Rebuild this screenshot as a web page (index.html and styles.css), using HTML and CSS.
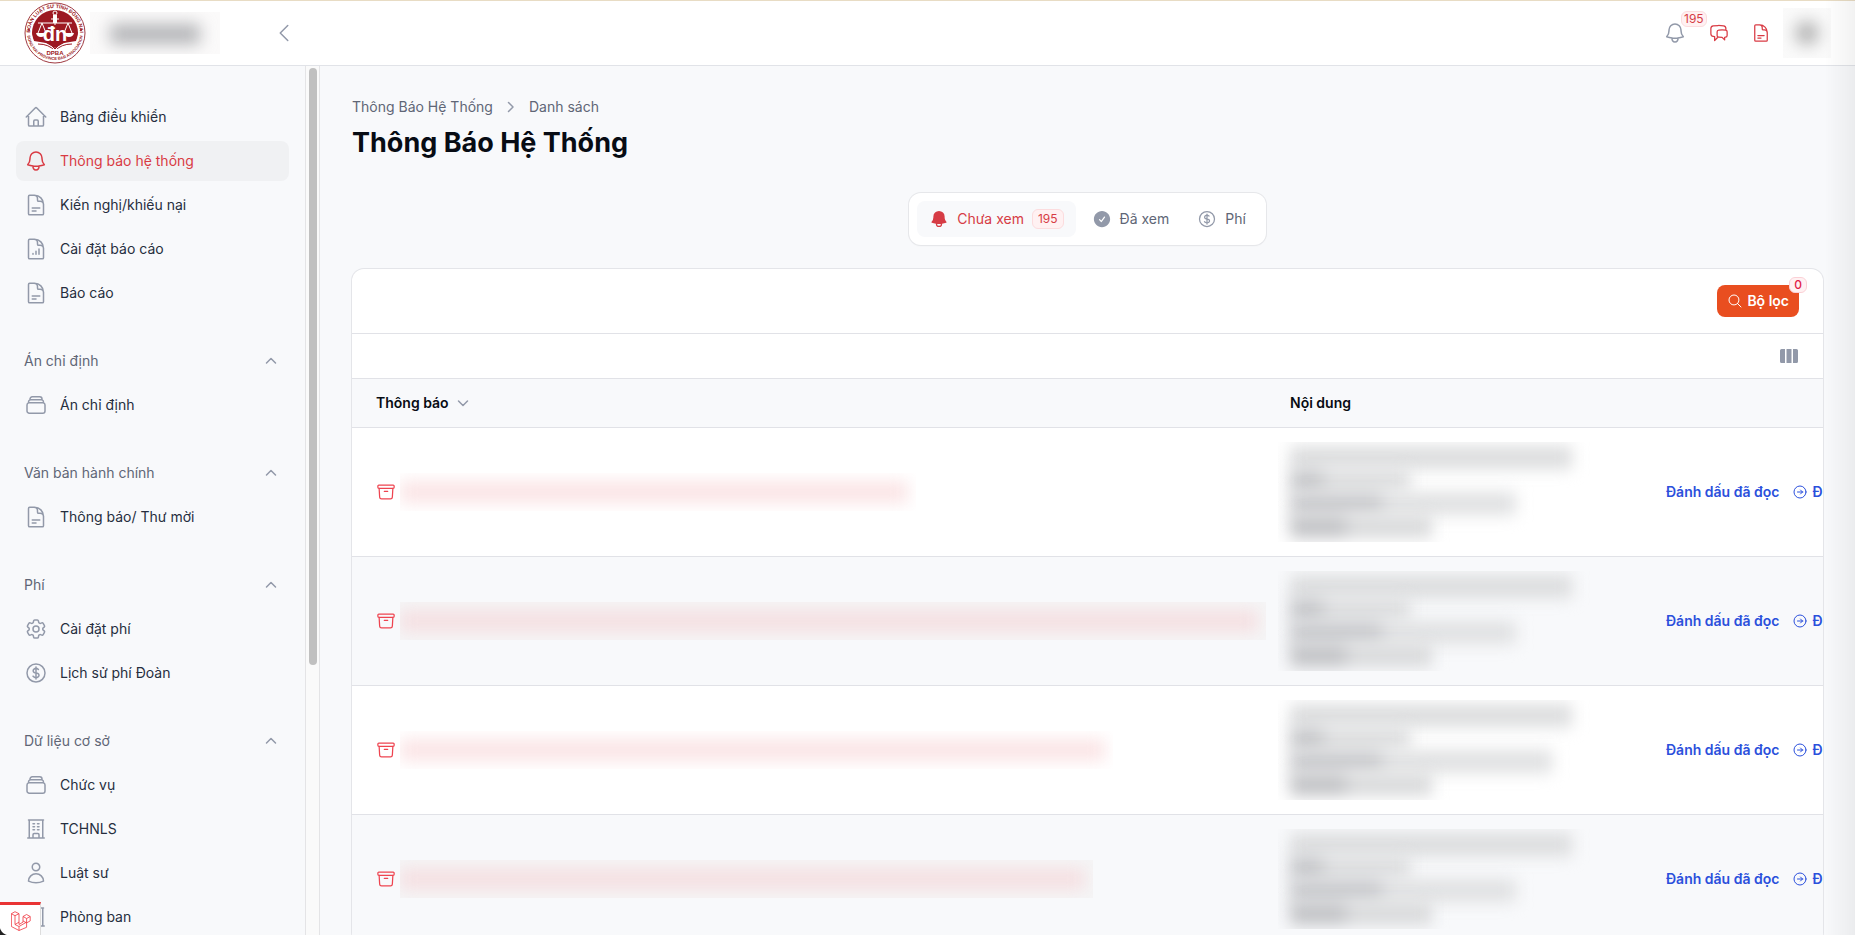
FILE: index.html
```
<!DOCTYPE html>
<html lang="vi">
<head>
    <meta charset="UTF-8">
    <meta name="viewport" content="width=device-width, initial-scale=1.0">
    <title>Thông Báo Hệ Thống</title>
    <link rel="stylesheet" href="styles.css">
</head>
<body>
    <!-- icon set -->
    <svg class="sprite" aria-hidden="true">
        <symbol id="i-home" viewBox="0 0 24 24"><path d="m2.25 12 8.954-8.955c.44-.439 1.152-.439 1.591 0L21.75 12M4.5 9.75v10.125c0 .621.504 1.125 1.125 1.125H9.75v-4.875c0-.621.504-1.125 1.125-1.125h2.25c.621 0 1.125.504 1.125 1.125V21h4.125c.621 0 1.125-.504 1.125-1.125V9.75M8.25 21h8.25"/></symbol>
        <symbol id="i-bell" viewBox="0 0 24 24"><path d="M14.857 17.082a23.848 23.848 0 0 0 5.454-1.31A8.967 8.967 0 0 1 18 9.75V9A6 6 0 0 0 6 9v.75a8.967 8.967 0 0 1-2.312 6.022c1.733.64 3.56 1.085 5.455 1.31m5.714 0a24.255 24.255 0 0 1-5.714 0m5.714 0a3 3 0 1 1-5.714 0"/></symbol>
        <symbol id="i-doc" viewBox="0 0 24 24"><path d="M19.5 14.25v-2.625a3.375 3.375 0 0 0-3.375-3.375h-1.5A1.125 1.125 0 0 1 13.5 7.125v-1.5a3.375 3.375 0 0 0-3.375-3.375H8.25m0 12.75h7.5m-7.5 3H12M10.5 2.25H5.625c-.621 0-1.125.504-1.125 1.125v17.25c0 .621.504 1.125 1.125 1.125h12.75c.621 0 1.125-.504 1.125-1.125V11.25a9 9 0 0 0-9-9Z"/></symbol>
        <symbol id="i-chart" viewBox="0 0 24 24"><path d="M19.5 14.25v-2.625a3.375 3.375 0 0 0-3.375-3.375h-1.5A1.125 1.125 0 0 1 13.5 7.125v-1.5a3.375 3.375 0 0 0-3.375-3.375H8.25M9 16.5v.75m3-3v3M15 12v5.25m-4.5-15H5.625c-.621 0-1.125.504-1.125 1.125v17.25c0 .621.504 1.125 1.125 1.125h12.75c.621 0 1.125-.504 1.125-1.125V11.25a9 9 0 0 0-9-9Z"/></symbol>
        <symbol id="i-stack" viewBox="0 0 24 24"><path d="M6 6.878V6a2.25 2.25 0 0 1 2.25-2.25h7.5A2.25 2.25 0 0 1 18 6v.878m-12 0c.235-.083.487-.128.75-.128h10.5c.263 0 .515.045.75.128m-12 0A2.25 2.25 0 0 0 4.5 9v.878m13.5-3A2.25 2.25 0 0 1 19.5 9v.878m0 0a2.246 2.246 0 0 0-.75-.128H5.25c-.263 0-.515.045-.75.128m15 0A2.25 2.25 0 0 1 21 12v6a2.25 2.25 0 0 1-2.25 2.25H5.25A2.25 2.25 0 0 1 3 18v-6c0-.98.626-1.813 1.5-2.122"/></symbol>
        <symbol id="i-cog" viewBox="0 0 24 24"><path d="M9.594 3.94c.09-.542.56-.94 1.11-.94h2.593c.55 0 1.02.398 1.11.94l.213 1.281c.063.374.313.686.645.87.074.04.147.083.22.127.325.196.72.257 1.075.124l1.217-.456a1.125 1.125 0 0 1 1.37.49l1.296 2.247a1.125 1.125 0 0 1-.26 1.431l-1.003.827c-.293.241-.438.613-.43.992a7.723 7.723 0 0 1 0 .255c-.008.378.137.75.43.991l1.004.827c.424.35.534.955.26 1.43l-1.298 2.247a1.125 1.125 0 0 1-1.369.491l-1.217-.456c-.355-.133-.75-.072-1.076.124a6.47 6.47 0 0 1-.22.128c-.331.183-.581.495-.644.869l-.213 1.281c-.09.543-.56.94-1.11.94h-2.594c-.55 0-1.019-.398-1.11-.94l-.213-1.281c-.062-.374-.312-.686-.644-.87a6.52 6.52 0 0 1-.22-.127c-.325-.196-.72-.257-1.076-.124l-1.217.456a1.125 1.125 0 0 1-1.369-.49l-1.297-2.247a1.125 1.125 0 0 1 .26-1.431l1.004-.827c.292-.24.437-.613.43-.991a6.932 6.932 0 0 1 0-.255c.007-.38-.138-.751-.43-.992l-1.004-.827a1.125 1.125 0 0 1-.26-1.43l1.297-2.247a1.125 1.125 0 0 1 1.37-.491l1.216.456c.356.133.751.072 1.076-.124.072-.044.146-.086.22-.128.332-.183.582-.495.644-.869l.214-1.28ZM15 12a3 3 0 1 1-6 0 3 3 0 0 1 6 0Z"/></symbol>
        <symbol id="i-dollar" viewBox="0 0 24 24"><path d="M12 6v12m-3-2.818.879.659c1.171.879 3.07.879 4.242 0 1.172-.879 1.172-2.303 0-3.182C13.536 12.219 12.768 12 12 12c-.725 0-1.45-.22-2.003-.659-1.106-.879-1.106-2.303 0-3.182s2.9-.879 4.006 0l.415.33M21 12a9 9 0 1 1-18 0 9 9 0 0 1 18 0Z"/></symbol>
        <symbol id="i-building" viewBox="0 0 24 24"><path d="M3.75 21h16.5M4.5 3h15M5.25 3v18m13.5-18v18M9 6.75h1.5m-1.5 3h1.5m-1.5 3h1.5m3-6H15m-1.5 3H15m-1.5 3H15M9 21v-3.375c0-.621.504-1.125 1.125-1.125h3.75c.621 0 1.125.504 1.125 1.125V21"/></symbol>
        <symbol id="i-user" viewBox="0 0 24 24"><path d="M15.75 6a3.75 3.75 0 1 1-7.5 0 3.75 3.75 0 0 1 7.5 0ZM4.501 20.118a7.5 7.5 0 0 1 14.998 0A17.933 17.933 0 0 1 12 21.75c-2.676 0-5.216-.584-7.499-1.632Z"/></symbol>
        <symbol id="i-chat" viewBox="0 0 24 24"><path d="M20.25 8.511c.884.284 1.5 1.128 1.5 2.097v4.286c0 1.136-.847 2.1-1.98 2.193-.34.027-.68.052-1.02.072v3.091l-3-3c-1.354 0-2.694-.055-4.02-.163a2.115 2.115 0 0 1-.825-.242m9.345-8.334a2.126 2.126 0 0 0-.476-.095 48.64 48.64 0 0 0-8.048 0c-1.131.094-1.976 1.057-1.976 2.192v4.286c0 .837.46 1.58 1.155 1.951m9.345-8.334V6.637c0-1.621-1.152-3.026-2.76-3.235A48.455 48.455 0 0 0 11.25 3c-2.115 0-4.198.137-6.24.402-1.608.209-2.76 1.614-2.76 3.235v6.226c0 1.621 1.152 3.026 2.76 3.235.577.075 1.157.14 1.74.194V21l4.155-4.155"/></symbol>
        <symbol id="i-archive" viewBox="0 0 24 24"><path d="m20.25 7.5-.625 10.632a2.25 2.25 0 0 1-2.247 2.118H6.622a2.25 2.25 0 0 1-2.247-2.118L3.75 7.5M10 11.25h4M3.375 7.5h17.25c.621 0 1.125-.504 1.125-1.125v-1.5c0-.621-.504-1.125-1.125-1.125H3.375c-.621 0-1.125.504-1.125 1.125v1.5c0 .621.504 1.125 1.125 1.125Z"/></symbol>
        <symbol id="i-search" viewBox="0 0 24 24"><path d="m21 21-5.197-5.197m0 0A7.5 7.5 0 1 0 5.196 5.196a7.5 7.5 0 0 0 10.607 10.607Z"/></symbol>
        <symbol id="i-go" viewBox="0 0 24 24"><path d="m12.75 15 3-3m0 0-3-3m3 3h-7.5M21 12a9 9 0 1 1-18 0 9 9 0 0 1 18 0Z"/></symbol>
        <symbol id="i-left" viewBox="0 0 24 24"><path d="M15.75 19.5 8.25 12l7.5-7.5"/></symbol>
        <symbol id="i-up" viewBox="0 0 20 20"><path d="m5.5 12 4.5-4.5 4.5 4.5"/></symbol>
        <symbol id="i-down" viewBox="0 0 20 20"><path d="m5.5 8 4.5 4.5 4.5-4.5"/></symbol>
        <symbol id="i-right" viewBox="0 0 20 20"><path d="m7.5 5.5 4.5 4.5-4.5 4.5"/></symbol>
        <symbol id="i-bell-solid" viewBox="0 0 24 24"><path fill-rule="evenodd" d="M5.25 9a6.75 6.75 0 0 1 13.5 0v.75c0 2.123.8 4.057 2.118 5.52a.75.75 0 0 1-.297 1.206c-1.544.57-3.16.99-4.831 1.243a3.75 3.75 0 1 1-7.48 0 24.585 24.585 0 0 1-4.831-1.244.75.75 0 0 1-.298-1.205A8.217 8.217 0 0 0 5.25 9.75V9Zm4.502 8.9a2.25 2.25 0 1 0 4.496 0 25.057 25.057 0 0 1-4.496 0Z"/></symbol>
        <symbol id="i-check-solid" viewBox="0 0 24 24"><path fill-rule="evenodd" d="M2.25 12c0-5.385 4.365-9.75 9.75-9.75s9.75 4.365 9.75 9.75-4.365 9.75-9.75 9.75S2.25 17.385 2.25 12Zm13.36-1.814a.75.75 0 1 0-1.22-.872l-3.236 4.53L9.53 12.22a.75.75 0 0 0-1.06 1.06l2.25 2.25a.75.75 0 0 0 1.14-.094l3.75-5.25Z"/></symbol>
        <symbol id="i-columns" viewBox="0 0 20 20"><path d="M2.5 3H6v14H2.5A1.5 1.5 0 0 1 1 15.500v-11A1.500 1.500 0 0 1 2.500 3ZM7.500 3h5v14h-5ZM14 3h3.500A1.500 1.500 0 0 1 19 4.500v11a1.500 1.500 0 0 1-1.500 1.500H14Z"/></symbol>
    </svg>

    <header class="topbar">
        <div class="brand">
            <svg class="logo" viewBox="0 0 62 62" role="img" aria-label="DPBA">
                <defs>
                    <path id="arc-top" d="M7 38a25 25 0 1 1 48 0"/>
                    <path id="arc-bottom" d="M3 30a28 28 0 0 0 56 0"/>
                </defs>
                <circle cx="31" cy="31" r="30" fill="#fff" stroke="#a03a42" stroke-width="1"/>
                <circle cx="31" cy="31" r="23" fill="#9c1822"/>
                <path d="M8 33v2a23 23 0 0 0 46 0v-2l-2 6-12 2-9 5-9-5-12-2z" fill="#fff"/>
                <path d="M11 38q13 0 20 9 7-9 20-9M14 42q11 0 17 7 6-7 17-7" fill="none" stroke="#9c1822" stroke-width="1"/>
                <circle cx="31" cy="11" r="2" fill="none" stroke="#fff"/>
                <path d="M31 13v10M14 21h34M27 17h8M18 21l-4 10m4-10 4 10M44 21l-4 10m4-10 4 10" fill="none" stroke="#fff"/>
                <path d="M12 31h10q-1 4-5 4t-5-4zM40 31h10q-1 4-5 4t-5-4zM29 13h4v8h-4z" fill="#fff"/>
                <text class="logo-mark" x="31" y="39">đn</text>
                <rect x="22" y="47" width="18" height="7" fill="#fff"/>
                <text class="logo-name" x="31" y="53">DPBA</text>
                <circle cx="5" cy="28" r="1" fill="#9c1822"/>
                <circle cx="57" cy="28" r="1" fill="#9c1822"/>
                <text class="logo-ring logo-ring-top"><textPath href="#arc-top" startOffset="50%">ĐOÀN LUẬT SƯ TỈNH ĐỒNG NAI</textPath></text>
                <text class="logo-ring"><textPath href="#arc-bottom" startOffset="50%">DONG NAI PROVINCE BAR ASSOCIATION</textPath></text>
            </svg>
            <span class="masked masked-name"><i></i></span>
        </div>
        <button class="icon-btn collapse" aria-label="Thu gọn"><svg class="icon"><use href="#i-left"/></svg></button>
        <div class="tools">
            <div class="tool-icons">
                <button class="icon-btn bell" aria-label="Thông báo"><svg class="icon"><use href="#i-bell"/></svg><span class="badge">195</span></button>
                <button class="icon-btn red" aria-label="Trao đổi"><svg class="icon icon-md"><use href="#i-chat"/></svg></button>
                <button class="icon-btn red" aria-label="Văn bản"><svg class="icon icon-md"><use href="#i-doc"/></svg></button>
            </div>
            <span class="masked masked-avatar"><i></i></span>
        </div>
    </header>

    <div class="layout">
        <aside class="sidebar">
            <nav class="nav">
                <div class="group">
                    <a class="item" href="#"><svg class="icon"><use href="#i-home"/></svg>Bảng điều khiển</a>
                    <a class="item active" href="#"><svg class="icon"><use href="#i-bell"/></svg>Thông báo hệ thống</a>
                    <a class="item" href="#"><svg class="icon"><use href="#i-doc"/></svg>Kiến nghị/khiếu nại</a>
                    <a class="item" href="#"><svg class="icon"><use href="#i-chart"/></svg>Cài đặt báo cáo</a>
                    <a class="item" href="#"><svg class="icon"><use href="#i-doc"/></svg>Báo cáo</a>
                </div>
                <div class="group">
                    <button class="group-title">Án chỉ định<svg class="icon icon-md"><use href="#i-up"/></svg></button>
                    <a class="item" href="#"><svg class="icon"><use href="#i-stack"/></svg>Án chỉ định</a>
                </div>
                <div class="group">
                    <button class="group-title">Văn bản hành chính<svg class="icon icon-md"><use href="#i-up"/></svg></button>
                    <a class="item" href="#"><svg class="icon"><use href="#i-doc"/></svg>Thông báo/ Thư mời</a>
                </div>
                <div class="group">
                    <button class="group-title">Phí<svg class="icon icon-md"><use href="#i-up"/></svg></button>
                    <a class="item" href="#"><svg class="icon"><use href="#i-cog"/></svg>Cài đặt phí</a>
                    <a class="item" href="#"><svg class="icon"><use href="#i-dollar"/></svg>Lịch sử phí Đoàn</a>
                </div>
                <div class="group">
                    <button class="group-title">Dữ liệu cơ sở<svg class="icon icon-md"><use href="#i-up"/></svg></button>
                    <a class="item" href="#"><svg class="icon"><use href="#i-stack"/></svg>Chức vụ</a>
                    <a class="item" href="#"><svg class="icon"><use href="#i-building"/></svg>TCHNLS</a>
                    <a class="item" href="#"><svg class="icon"><use href="#i-user"/></svg>Luật sư</a>
                    <a class="item" href="#"><svg class="icon"><use href="#i-building"/></svg>Phòng ban</a>
                </div>
            </nav>
            <div class="scrollbar"><div class="thumb"></div></div>
        </aside>

        <main class="main">
            <div class="heading">
                <nav class="crumbs">
                    <a href="#">Thông Báo Hệ Thống</a>
                    <svg class="icon icon-md"><use href="#i-right"/></svg>
                    <a href="#">Danh sách</a>
                </nav>
                <h1>Thông Báo Hệ Thống</h1>
            </div>

            <div class="tabs">
                <button class="tab selected"><svg class="icon icon-md solid"><use href="#i-bell-solid"/></svg>Chưa xem<span class="badge">195</span></button>
                <button class="tab"><svg class="icon icon-md solid"><use href="#i-check-solid"/></svg>Đã xem</button>
                <button class="tab"><svg class="icon icon-md"><use href="#i-dollar"/></svg>Phí</button>
            </div>

            <section class="card">
                <div class="card-head">
                    <button class="filter"><svg class="icon icon-sm"><use href="#i-search"/></svg>Bộ lọc<span class="badge">0</span></button>
                </div>
                <div class="card-tools">
                    <button class="icon-btn" aria-label="Cột"><svg class="icon icon-md solid"><use href="#i-columns"/></svg></button>
                </div>
                <table>
                    <colgroup><col><col class="col-content"><col class="col-actions"></colgroup>
                    <thead>
                        <tr>
                            <th><button class="sort">Thông báo<svg class="icon icon-md"><use href="#i-down"/></svg></button></th>
                            <th>Nội dung</th>
                            <th></th>
                        </tr>
                    </thead>
                    <tbody>
                        <tr>
                            <td><div class="title"><svg class="icon icon-md"><use href="#i-archive"/></svg><span class="masked masked-title" style="width: 516px"><i></i></span></div></td>
                            <td class="content"><div class="masked masked-content"><i></i><i></i><i></i><i></i></div></td>
                            <td><div class="actions"><a href="#">Đánh dấu đã đọc</a><a href="#"><svg class="icon icon-sm"><use href="#i-go"/></svg>Đ</a></div></td>
                        </tr>
                        <tr>
                            <td><div class="title"><svg class="icon icon-md"><use href="#i-archive"/></svg><span class="masked masked-title" style="width: 875px"><i></i></span></div></td>
                            <td class="content"><div class="masked masked-content"><i></i><i></i><i></i><i></i></div></td>
                            <td><div class="actions"><a href="#">Đánh dấu đã đọc</a><a href="#"><svg class="icon icon-sm"><use href="#i-go"/></svg>Đ</a></div></td>
                        </tr>
                        <tr>
                            <td><div class="title"><svg class="icon icon-md"><use href="#i-archive"/></svg><span class="masked masked-title" style="width: 713px"><i></i></span></div></td>
                            <td class="content"><div class="masked masked-content"><i></i><i></i><i class="long"></i><i></i></div></td>
                            <td><div class="actions"><a href="#">Đánh dấu đã đọc</a><a href="#"><svg class="icon icon-sm"><use href="#i-go"/></svg>Đ</a></div></td>
                        </tr>
                        <tr>
                            <td><div class="title"><svg class="icon icon-md"><use href="#i-archive"/></svg><span class="masked masked-title" style="width: 693px"><i></i></span></div></td>
                            <td class="content"><div class="masked masked-content"><i></i><i></i><i></i><i></i></div></td>
                            <td><div class="actions"><a href="#">Đánh dấu đã đọc</a><a href="#"><svg class="icon icon-sm"><use href="#i-go"/></svg>Đ</a></div></td>
                        </tr>
                    </tbody>
                </table>
            </section>
        </main>
    </div>

    <button class="debugbar" aria-label="Debugbar">
        <svg viewBox="0 0 50 52"><path d="M1 9 10 4l10 5v27l10-6V16l9-5 9 5v11l-9 5v11L20 51 1 41ZM1 9l9 5 10-5M10 14v22l10 5 19-11M10 36l10-6M20 41v10M30 16l9 5 9-5M39 21v11M30 27l9 5"/></svg>
    </button>
    <div class="edge-shade"></div>
</body>
</html>
```
FILE: styles.css
```
* {
    box-sizing: border-box;
}
body {
    margin: 0;
    height: 100vh;
    overflow: hidden;
    display: flex;
    flex-direction: column;
    font-family: Inter, "Noto Sans", sans-serif;
    font-size: 14px;
    line-height: 20px;
    color: #262e3e;
    background: #f8f9fb;
}
a {
    color: inherit;
    text-decoration: none;
}
button {
    font: inherit;
    color: inherit;
    background: none;
    border: none;
    padding: 0;
    cursor: pointer;
}
.sprite {
    position: absolute;
    width: 0;
    height: 0;
}
.icon {
    width: 24px;
    height: 24px;
    flex-shrink: 0;
    fill: none;
    stroke: currentColor;
    stroke-width: 1.5;
    stroke-linecap: round;
    stroke-linejoin: round;
    color: #9299a9;
}
.icon-md {
    width: 20px;
    height: 20px;
}
.icon-sm {
    width: 16px;
    height: 16px;
}
.solid {
    fill: currentColor;
    stroke: none;
}
.icon-btn {
    position: relative;
    display: flex;
}
.badge {
    padding: 0 5px;
    font-size: 12px;
    line-height: 18px;
    color: #d63c45;
    background: #fff1f2;
    border: 1px solid #fcdcde;
    border-radius: 6px;
}

/* top bar */
.topbar {
    flex-shrink: 0;
    display: flex;
    align-items: center;
    height: 66px;
    padding: 0 24px;
    background: #fff;
    border-top: 1px solid #e8dcc4;
    border-bottom: 1px solid #e1e3e8;
}
.brand {
    display: flex;
    align-items: center;
    gap: 4px;
    width: 248px;
}
.logo {
    width: 62px;
    height: 62px;
}
.logo text {
    font-family: "Liberation Sans", sans-serif;
    font-weight: bold;
    text-anchor: middle;
    fill: #9c1822;
}
.logo .logo-mark {
    font-size: 20px;
    fill: #fff;
}
.logo .logo-name {
    font-size: 6px;
}
.logo .logo-ring {
    font-size: 4px;
}
.logo .logo-ring-top {
    font-size: 5px;
}
.tools {
    display: flex;
    align-items: center;
    margin-left: auto;
    gap: 12px;
}
.tool-icons {
    display: flex;
    align-items: center;
    gap: 22px;
}
.bell .badge {
    position: absolute;
    left: 18px;
    top: -10px;
    padding: 0 2px;
    line-height: 14px;
}
.red .icon {
    color: #d93b44;
}

/* hidden private data */
.masked {
    display: block;
    overflow: hidden;
}
.masked i {
    display: block;
    filter: blur(8px);
}
.masked-name {
    width: 130px;
    height: 42px;
    padding: 12px 20px;
    background: #fbfafa;
}
.masked-name i {
    height: 20px;
    background: #b4b5b8;
}
.masked-avatar {
    width: 48px;
    height: 50px;
    padding: 13px 12px;
    background: #fafafa;
}
.masked-avatar i {
    height: 24px;
    border-radius: 12px;
    background: #b4b4b4;
}
.masked-title {
    height: 38px;
    padding: 8px 8px 8px 0;
}
.masked-title i {
    height: 22px;
    background: #fbe5e6;
}
tr:nth-child(even) .masked-title {
    background: #f5f5f6;
}
tr:nth-child(even) .masked-title i {
    background: #f5e0e2;
}
.masked-content {
    width: 314px;
    height: 100px;
    padding: 4px 12px;
}
.masked-content i {
    width: 282px;
    height: 23px;
    background: #dcddde;
}
.masked-content i:nth-child(2) {
    width: 120px;
    background: linear-gradient(90deg, #c6c7ca 30px, #dddedf 36px);
}
.masked-content i:nth-child(3) {
    width: 226px;
    background: linear-gradient(90deg, #c9cacd 88px, #e0e1e2 96px);
}
.masked-content i:nth-child(4) {
    width: 142px;
    background: linear-gradient(90deg, #c2c3c6 52px, #d9dadb 60px);
}
.masked-content .long:nth-child(3) {
    width: 262px;
}

/* sidebar */
.layout {
    flex: 1;
    min-height: 0;
    display: flex;
}
.sidebar {
    flex-shrink: 0;
    display: flex;
    width: 320px;
    overflow: hidden;
}
.nav {
    flex: 1;
    display: flex;
    flex-direction: column;
    gap: 28px;
    padding: 31px 16px;
}
.group {
    display: flex;
    flex-direction: column;
    gap: 4px;
}
.item {
    display: flex;
    align-items: center;
    gap: 12px;
    padding: 8px;
    border-radius: 8px;
}
.active,
.active .icon {
    color: #d93b44;
}
.active {
    background: #f0f1f3;
}
.group-title {
    display: flex;
    align-items: center;
    justify-content: space-between;
    padding: 10px 8px;
    color: #606676;
}
.scrollbar {
    width: 15px;
    padding: 2px 3px;
    background: #fafafa;
    border-left: 1px solid #e4e4e6;
    border-right: 1px solid #e4e4e6;
}
.thumb {
    width: 8px;
    height: 69%;
    border-radius: 4px;
    background: #c0c0c0;
}

/* page */
.main {
    flex: 1;
    min-width: 0;
    display: flex;
    flex-direction: column;
    padding: 31px 32px;
}
.heading {
    display: flex;
    flex-direction: column;
    gap: 8px;
}
.crumbs {
    display: flex;
    align-items: center;
    gap: 8px;
    color: #606676;
}
h1 {
    margin: 0;
    font-size: 27px;
    line-height: 36px;
    font-weight: 700;
    color: #080c14;
}
.tabs {
    display: flex;
    align-self: center;
    gap: 4px;
    margin: 32px 0 24px;
    padding: 8px;
    background: #fff;
    border-radius: 12px;
    box-shadow: 0 0 0 1px #e6e7ea, 0 1px 2px 0 #0000000d;
}
.tab {
    display: flex;
    align-items: center;
    gap: 8px;
    padding: 8px 12px;
    border-radius: 8px;
    color: #606676;
}
.selected {
    color: #d63c45;
    background: #f8f9fb;
}
.selected .icon {
    color: #d63c45;
}
.card {
    flex-shrink: 0;
    overflow: hidden;
    background: #fff;
    border-radius: 12px;
    box-shadow: 0 0 0 1px #e4e5e9;
}
.card-head {
    display: flex;
    justify-content: flex-end;
    padding: 16px 24px;
    border-bottom: 1px solid #e1e2e7;
}
.filter {
    position: relative;
    display: flex;
    align-items: center;
    gap: 4px;
    padding: 6px 10px;
    border-radius: 8px;
    font-weight: 600;
    color: #fff;
    background: #e94e20;
}
.filter .icon {
    color: #fff;
}
.filter .badge {
    position: absolute;
    top: -8px;
    right: -8px;
    padding: 0 4px;
    line-height: 14px;
    font-weight: 500;
    color: #e11d48;
    border-color: #fbd0d6;
}
.card-tools {
    display: flex;
    justify-content: flex-end;
    padding: 12px 24px;
    border-bottom: 1px solid #e1e2e7;
}
table {
    width: 100%;
    table-layout: fixed;
    border-collapse: separate;
    border-spacing: 0;
}
.col-content {
    width: 376px;
}
.col-actions {
    width: 181px;
}
th,
td {
    padding: 0 0 0 24px;
    text-align: left;
    border-bottom: 1px solid #e1e2e7;
}
th {
    height: 49px;
    font-weight: 600;
    color: #080c14;
    background: #f8f9fb;
}
td {
    height: 129px;
}
tbody tr:nth-child(even) {
    background: #f8f9fb;
}
.sort {
    display: flex;
    align-items: center;
    gap: 4px;
}
.title {
    display: flex;
    align-items: center;
    gap: 4px;
}
.title .icon {
    color: #ee4450;
}
td.content {
    padding-left: 12px;
}
.actions {
    display: flex;
    gap: 13px;
    white-space: nowrap;
    font-weight: 600;
    color: #2b50dc;
}
.actions a {
    display: flex;
    align-items: center;
    gap: 4px;
}
.actions .icon {
    color: #2b50dc;
}

/* debug toolbar handle in the window corner */
.debugbar {
    position: fixed;
    left: 0;
    bottom: 0;
    width: 41px;
    height: 33px;
    padding: 4px 11px;
    border-top: 3px solid #e93434;
    border-right: 1px solid #ddd;
    background: radial-gradient(circle at 10px 0, #fff 10px, #222 11px) left bottom / 10px 10px no-repeat, #fff;
}
.debugbar svg {
    display: block;
    width: 20px;
    height: 21px;
    fill: none;
    stroke: #f0353f;
    stroke-width: 2;
    stroke-linejoin: round;
}
.edge-shade {
    position: fixed;
    top: 0;
    right: 0;
    bottom: 0;
    width: 30px;
    background: linear-gradient(90deg, transparent, #0000000d);
    pointer-events: none;
}
```
